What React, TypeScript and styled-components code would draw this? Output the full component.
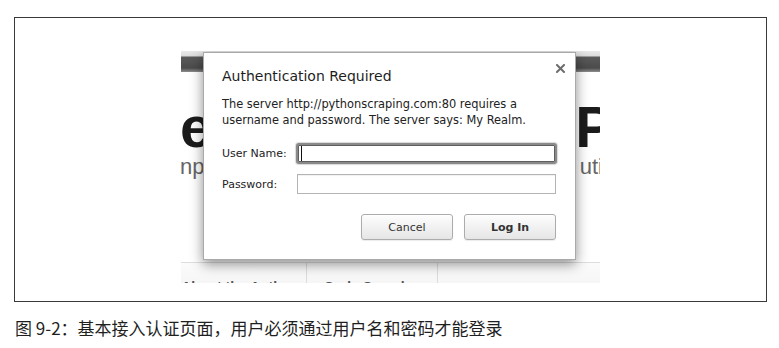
import React from 'react';
import styled, { createGlobalStyle } from 'styled-components';

const GlobalStyle = createGlobalStyle`
  html, body {
    margin: 0;
    padding: 0;
    background: #ffffff;
  }
  body {
    font-family: "DejaVu Sans", "Liberation Sans", sans-serif;
  }
`;

const Page = styled.div`
  padding: 17px 12px 0 14px;
`;

const Frame = styled.div`
  box-sizing: border-box;
  width: 753px;
  height: 285px;
  border: 1px solid #3a3a3a;
  display: flex;
  justify-content: center;
  padding-top: 33px;
`;

const Shot = styled.div`
  position: relative;
  width: 419px;
  height: 232px;
  overflow: hidden;
  background: #ffffff;
  display: flex;
  flex-direction: column;
`;

const TopBar = styled.div`
  flex-shrink: 0;
  height: 21px;
  background: linear-gradient(
    #e9e9e9 0px,
    #dcdcdc 5px,
    #5a5a5a 6px,
    #4b4b4b 17px,
    #8d8d8d 21px
  );
`;

const Hero = styled.div`
  flex-shrink: 0;
  height: 190px;
  padding-top: 26px;
  box-sizing: border-box;
  font-family: "Liberation Sans", Arial, sans-serif;
`;

const HeroRow = styled.div<{ $size: number; $color: string; $weight: number }>`
  display: flex;
  justify-content: space-between;
  white-space: nowrap;
  font-size: ${({ $size }) => $size}px;
  line-height: 1;
  font-weight: ${({ $weight }) => $weight};
  color: ${({ $color }) => $color};
`;

const Clip = styled.span<{ $left?: number; $right?: number }>`
  margin-left: ${({ $left = 0 }) => $left}px;
  margin-right: ${({ $right = 0 }) => $right}px;
`;

const Nav = styled.div`
  flex-shrink: 0;
  height: 40px;
  display: flex;
  border-top: 1px solid #dedede;
  background: linear-gradient(#fbfbfb, #f1f1f1);
  font-family: "Liberation Sans", Arial, sans-serif;
  font-size: 14px;
  font-weight: 700;
  color: #555555;
`;

const NavItem = styled.div<{ $width: number; $shift?: number }>`
  box-sizing: border-box;
  width: ${({ $width }) => $width}px;
  padding-top: 16px;
  padding-right: ${({ $shift = 0 }) => $shift}px;
  text-align: center;
  white-space: nowrap;
  border-right: 1px solid #dcdcdc;

  &:last-child {
    flex: 1;
    border-right: none;
  }
`;

const Dialog = styled.div`
  position: absolute;
  left: 22px;
  top: 1px;
  width: 373px;
  height: 208px;
  box-sizing: border-box;
  padding: 14px 19px 0 18px;
  background: #ffffff;
  border: 1px solid #a9a9a9;
  box-shadow: 0 4px 12px rgba(0, 0, 0, 0.45);
  color: #222222;
`;

const Close = styled.button`
  position: absolute;
  top: 9px;
  right: 9px;
  width: 12px;
  height: 12px;
  padding: 0;
  border: none;
  background: none;
  display: flex;
  align-items: center;
  justify-content: center;
`;

const Title = styled.div`
  font-size: 14px;
  line-height: 18px;
  color: #1e1e1e;
`;

const Message = styled.p`
  margin: 11px 0 0 0;
  font-size: 11.4px;
  line-height: 16px;
  color: #222222;
`;

const Form = styled.div`
  margin-top: 15px;
  display: grid;
  grid-template-columns: 75px 1fr;
  row-gap: 10px;
  align-items: center;
`;

const Label = styled.label`
  font-size: 11px;
  color: #222222;
  white-space: nowrap;
`;

const FieldWrap = styled.div`
  position: relative;
`;

const Field = styled.input<{ $focused?: boolean }>`
  display: block;
  box-sizing: border-box;
  height: ${({ $focused }) => ($focused ? 21 : 20)}px;
  margin: ${({ $focused }) => ($focused ? '0 -1px 0 -1px' : '0')};
  width: ${({ $focused }) => ($focused ? 'calc(100% + 2px)' : '100%')};
  border: ${({ $focused }) => ($focused ? '2px solid #8a8a8a' : '1px solid #b4b4b4')};
  border-radius: ${({ $focused }) => ($focused ? 3 : 0)}px;
  box-shadow: ${({ $focused }) =>
    $focused ? 'inset 0 0 0 1px #5f5f5f, 0 0 1px 1px rgba(0,0,0,0.15)' : 'inset 0 1px 1px rgba(0,0,0,0.06)'};
  outline: none;
  background: #ffffff;
  font-size: 11px;
`;

const Caret = styled.span`
  position: absolute;
  left: 4px;
  top: 3px;
  width: 1px;
  height: 15px;
  background: #111111;
`;

const Actions = styled.div`
  margin-top: 20px;
  display: flex;
  justify-content: flex-end;
  gap: 11px;
`;

const Button = styled.button<{ $primary?: boolean }>`
  width: 92px;
  height: 26px;
  padding: 0;
  border: 1px solid #acacac;
  border-radius: 3px;
  background: linear-gradient(#fdfdfd, #e6e6e6);
  box-shadow: inset 0 1px 0 #ffffff, 0 1px 1px rgba(0, 0, 0, 0.08);
  font-family: "DejaVu Sans", sans-serif;
  font-size: 11px;
  font-weight: ${({ $primary }) => ($primary ? 700 : 400)};
  color: #333333;
`;

const Caption = styled.div`
  margin-top: 13px;
  padding-left: 1px;
  font-family: "Noto Sans CJK SC", "Liberation Sans", sans-serif;
  font-size: 17px;
  line-height: 26px;
  color: #1f1f1f;
`;

const CloseIcon = () => (
  <svg width="9" height="9" viewBox="0 0 9 9">
    <path d="M1 1 L8 8 M8 1 L1 8" stroke="#6e6e6e" strokeWidth="2" strokeLinecap="square" />
  </svg>
);

export default function App() {
  return (
    <>
      <GlobalStyle />
      <Page>
        <Frame>
          <Shot>
            <TopBar />
            <Hero>
              <HeroRow $size={58} $color="#1b1b1b" $weight={700}>
                <Clip $left={-1}>e</Clip>
                <Clip $right={-14}>P</Clip>
              </HeroRow>
              <HeroRow $size={22} $color="#666666" $weight={400}>
                <Clip $left={-1}>np</Clip>
                <Clip $right={-3}>uti</Clip>
              </HeroRow>
            </Hero>
            <Nav>
              <NavItem $width={126} $shift={10}>About the Author</NavItem>
              <NavItem $width={131}>Code Samples</NavItem>
              <NavItem $width={162} />
            </Nav>
            <Dialog>
              <Close aria-label="Close">
                <CloseIcon />
              </Close>
              <Title>Authentication Required</Title>
              <Message>
                The server http://pythonscraping.com:80 requires a
                <br />
                username and password. The server says: My Realm.
              </Message>
              <Form>
                <Label>User Name:</Label>
                <FieldWrap>
                  <Field $focused type="text" />
                  <Caret />
                </FieldWrap>
                <Label>Password:</Label>
                <FieldWrap>
                  <Field type="password" />
                </FieldWrap>
              </Form>
              <Actions>
                <Button>Cancel</Button>
                <Button $primary>Log In</Button>
              </Actions>
            </Dialog>
          </Shot>
        </Frame>
        <Caption>图 9-2：基本接入认证页面，用户必须通过用户名和密码才能登录</Caption>
      </Page>
    </>
  );
}
